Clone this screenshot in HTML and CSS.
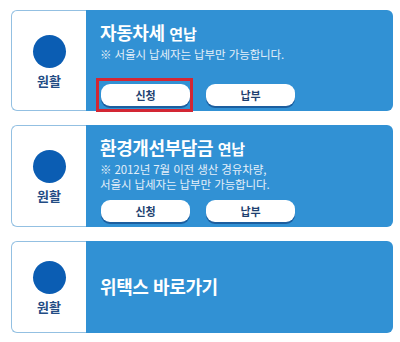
FILE: index.html
```html
<!DOCTYPE html>
<html lang="ko">
<head>
<meta charset="utf-8">
<link rel="stylesheet" href="styles.css">
</head>
<body>
<div class="list">
  <div class="card card-tall">
    <div class="status">
      <span class="dot"></span>
      <span class="status-label">원활</span>
    </div>
    <div class="body">
      <div class="title">자동차세 <span class="sub">연납</span></div>
      <p class="note">※ 서울시 납세자는 납부만 가능합니다.</p>
      <div class="actions">
        <button class="btn btn-focus">신청</button>
        <button class="btn">납부</button>
      </div>
    </div>
  </div>
  <div class="card card-tall2">
    <div class="status">
      <span class="dot"></span>
      <span class="status-label">원활</span>
    </div>
    <div class="body">
      <div class="title">환경개선부담금 <span class="sub">연납</span></div>
      <p class="note">※ 2012년 7월 이전 생산 경유차량,<br>서울시 납세자는 납부만 가능합니다.</p>
      <div class="actions">
        <button class="btn">신청</button>
        <button class="btn">납부</button>
      </div>
    </div>
  </div>
  <div class="card card-short">
    <div class="status">
      <span class="dot"></span>
      <span class="status-label">원활</span>
    </div>
    <div class="body body-center">
      <div class="title">위택스 바로가기</div>
    </div>
  </div>
</div>
</body>
</html>
```

FILE: styles.css
```css
* { box-sizing: border-box; }
html, body {
  margin: 0;
  padding: 0;
  background: #ffffff;
}
body {
  font-family: "Noto Sans CJK KR", "Noto Sans", sans-serif;
}
.list {
  display: flex;
  flex-direction: column;
  gap: 14px;
  padding: 10px 7px 0 11px;
}
.card {
  display: flex;
  border-radius: 6px;
}
.card-tall { height: 101px; }
.card-tall2 { height: 102px; }
.card-short { height: 92px; }
.status {
  width: 75px;
  flex: none;
  border: 1px solid #93c0e2;
  border-right: none;
  border-radius: 6px 0 0 6px;
  background: #ffffff;
  display: flex;
  flex-direction: column;
  align-items: center;
  justify-content: center;
  gap: 5px;
  padding-top: 2px;
}
.dot {
  width: 33px;
  height: 33px;
  border-radius: 50%;
  background: #0b5db3;
}
.status-label {
  font-size: 13px;
  font-weight: 700;
  color: #234c84;
  line-height: 16px;
}
.body {
  flex: 1;
  background: #3191d4;
  border-radius: 0 6px 6px 0;
  padding: 11px 10px 5px 14px;
  display: flex;
  flex-direction: column;
  color: #ffffff;
}
.body-center {
  justify-content: center;
  padding-top: 0;
  padding-bottom: 2px;
}
.title {
  font-size: 18px;
  font-weight: 700;
  line-height: 22px;
  letter-spacing: -0.4px;
}
.sub {
  font-size: 15px;
  font-weight: 700;
  letter-spacing: -0.2px;
}
.note {
  margin: 2px 0 0;
  font-size: 11.5px;
  line-height: 15px;
  color: #e4eff9;
  letter-spacing: -0.1px;
}
.actions {
  margin-top: auto;
  display: flex;
  gap: 16px;
  padding-left: 1px;
}
.btn {
  position: relative;
  width: 89px;
  height: 22px;
  border: none;
  border-radius: 9px;
  background: #ffffff;
  box-shadow: 0 2px 0 #1b5e9f;
  font-family: inherit;
  font-size: 11px;
  font-weight: 700;
  color: #1e3f70;
  padding: 0;
  line-height: 22px;
}
.btn-focus::after {
  content: "";
  position: absolute;
  left: -5px;
  right: -3px;
  top: -6px;
  bottom: -6px;
  border: 3px solid #d32634;
}
```
